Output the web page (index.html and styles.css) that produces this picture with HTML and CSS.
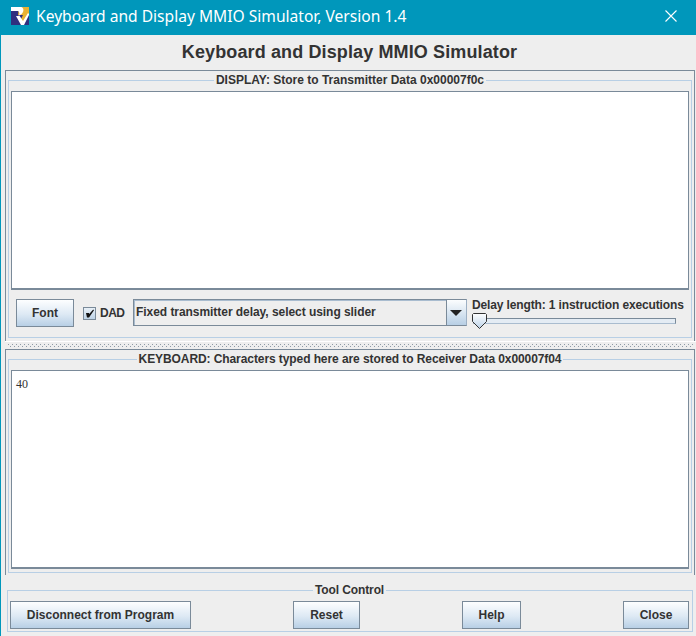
FILE: index.html
```html
<!DOCTYPE html>
<html lang="en">
<head>
  <meta charset="UTF-8" />
  <title>Keyboard and Display MMIO Simulator</title>
  <link rel="stylesheet" href="styles.css">
</head>
<body>
  <header class="titlebar">
    <svg class="logo" width="18" height="18" viewBox="0 0 18 18">
      <rect width="18" height="18" fill="#2f2f7f"/>
      <path d="M8 0H18V7L13 14H9L12 8H7Z" fill="#e8b233"/>
      <path d="M0 0H9C12 0 13 2 12 5C11 7 10 8 8 8L12 14L17 6L18 7V8L13 18H10L5 9H7C8 9 9 7 8 5C8 4 7 4 6 4H0Z" fill="#fff"/>
    </svg>
    <span class="titlebar-text">Keyboard and Display MMIO Simulator, Version 1.4</span>
    <svg class="close-icon" width="12" height="12" viewBox="0 0 12 12">
      <path d="M0.5 0.5L11.5 11.5M11.5 0.5L0.5 11.5" stroke="#fff" stroke-width="1.1" fill="none"/>
    </svg>
  </header>

  <h1>Keyboard and Display MMIO Simulator</h1>

  <section class="pane display-pane">
    <fieldset class="group">
      <legend>DISPLAY: Store to Transmitter Data 0x00007f0c</legend>
      <div class="text-area display-area"></div>
      <div class="controls">
        <button class="btn font-btn">Font</button>
        <label class="dad">
          <span class="checkbox">
            <svg width="11" height="11" viewBox="0 0 11 11">
              <path d="M2 5H5L5.2 6L9.2 1.5L10 2.3L5 9.5H3Z" fill="#111"/>
            </svg>
          </span>
          <span class="dad-text">DAD</span>
        </label>
        <div class="combo">
          <span class="combo-text">Fixed transmitter delay, select using slider</span>
          <span class="combo-arrow"></span>
        </div>
        <div class="delay">
          <div class="delay-label">Delay length: 1 instruction executions</div>
          <div class="slider">
            <div class="slider-track"></div>
            <svg class="slider-thumb" width="15" height="16" viewBox="0 0 15 16">
              <defs>
                <linearGradient id="thumbFill" x1="0" y1="0" x2="0" y2="1">
                  <stop offset="0" stop-color="#fff"/>
                  <stop offset="1" stop-color="#bcd2e8"/>
                </linearGradient>
              </defs>
              <path d="M1.5 .5H13.5L14.5 1.5V8.5L7.5 15.5L.5 8.5V1.5Z" fill="url(#thumbFill)" stroke="#333"/>
            </svg>
          </div>
        </div>
      </div>
    </fieldset>
  </section>

  <div class="splitter"><div class="grip"></div></div>

  <section class="pane keyboard-pane">
    <fieldset class="group">
      <legend class="keyboard-legend">KEYBOARD: Characters typed here are stored to Receiver Data 0x00007f04</legend>
      <div class="text-area keyboard-area">40</div>
    </fieldset>
  </section>

  <fieldset class="group tool-control">
    <legend class="tool-legend">Tool Control</legend>
    <div class="tool-buttons">
      <button class="btn disconnect">Disconnect from Program</button>
      <button class="btn reset">Reset</button>
      <button class="btn help">Help</button>
      <button class="btn close">Close</button>
    </div>
  </fieldset>
</body>
</html>
```

FILE: styles.css
```css
:root {
  --teal: #0097bb;
  --panel: #eeeeee;
  --line: #7a8a99;
  --group-line: #b8cfe5;
  --text: #333333;
}

* {
  box-sizing: border-box;
}

body {
  margin: 0;
  width: 696px;
  height: 636px;
  overflow: hidden;
  background: var(--panel);
  border-left: 1px solid var(--teal);
  color: var(--text);
  font-family: "Liberation Sans", Arial, sans-serif;
  font-size: 12px;
  font-weight: bold;
}

.titlebar {
  display: flex;
  align-items: center;
  height: 35px;
  margin-left: -1px;
  padding: 0 19px 0 11px;
  background: var(--teal);
  color: #fff;
}

.logo {
  margin-top: -3px;
}

.titlebar-text {
  margin: -3px 0 0 7px;
  font-family: "Noto Sans", sans-serif;
  font-size: 15.6px;
  font-weight: normal;
}

.close-icon {
  margin-left: auto;
  margin-top: -3px;
}

h1 {
  height: 35px;
  margin: 0;
  padding-left: 2px;
  font-size: 18px;
  letter-spacing: 0.12px;
  line-height: 34px;
  text-align: center;
}

.pane {
  margin: 0 1px 0 4px;
  padding: 2px 2px 3px;
  border-top: 1px solid var(--line);
  border-left: 1px solid var(--line);
  border-right: 1px solid var(--line);
}

.keyboard-pane {
  padding-bottom: 2px;
}

.group {
  min-width: 0;
  margin: 0;
  padding: 4px 2px 0;
  border: 1px solid var(--group-line);
}

.keyboard-pane .group {
  padding-bottom: 3px;
}

legend {
  margin: 0 auto;
  padding: 0 2px;
  font-size: 12px;
  line-height: 14px;
}

.keyboard-legend {
  letter-spacing: -0.085px;
}

.tool-legend {
  letter-spacing: -0.1px;
}

.text-area {
  background: #fff;
  border: 1px solid var(--line);
  border-bottom-width: 2px;
}

.display-area {
  height: 199px;
}

.keyboard-area {
  height: 199px;
  padding: 6px 4px;
  font-family: "Liberation Serif", serif;
  font-size: 12px;
  font-weight: normal;
}

.controls {
  display: flex;
  align-items: flex-start;
  height: 47px;
  padding: 9px 0 0 5px;
}

.btn {
  height: 28px;
  padding: 0;
  background: linear-gradient(#fdfeff, #dde9f4 55%, #b8cfe5);
  border: 1px solid var(--line);
  color: var(--text);
  font-family: inherit;
  font-size: 12px;
  font-weight: bold;
}

.font-btn {
  width: 58px;
}

.dad {
  display: flex;
  align-items: center;
  gap: 4px;
  height: 28px;
  margin-left: 9px;
}

.dad-text {
  width: 24px;
  letter-spacing: -0.5px;
}

.checkbox {
  display: flex;
  align-items: center;
  justify-content: center;
  width: 13px;
  height: 13px;
  margin-top: 1px;
  background: linear-gradient(#e8f0f7, #bdd2e6);
  border: 1px solid var(--line);
}

.combo {
  display: flex;
  width: 334px;
  height: 27px;
  margin-left: 9px;
  border: 1px solid var(--line);
  border-right-color: #9db0c4;
  box-shadow: inset 1px 1px 0 #a9bccf;
}

.combo-text {
  flex: 1;
  padding: 5px 0 0 2px;
  border-right: 1px solid var(--line);
  letter-spacing: -0.05px;
}

.combo-arrow {
  position: relative;
  width: 19px;
  background: linear-gradient(#fbfdfe, #b8cfe5);
}

.combo-arrow::after {
  content: "";
  position: absolute;
  left: 3px;
  top: 10px;
  border-left: 6px solid transparent;
  border-right: 6px solid transparent;
  border-top: 6px solid #222;
}

.delay {
  margin: -1px 0 0 5px;
  white-space: nowrap;
}

.delay-label {
  letter-spacing: -0.13px;
  line-height: 14px;
}

.slider {
  position: relative;
  height: 18px;
  margin-top: 1px;
}

.slider-track {
  position: absolute;
  left: 1px;
  top: 5px;
  width: 203px;
  height: 6px;
  background: #e4ecf4;
  border: 1px solid var(--line);
  border-bottom-color: #a9bccf;
}

.slider-thumb {
  position: absolute;
  left: 0;
  top: 0;
}

.splitter {
  height: 8px;
  margin-left: 4px;
  padding: 2px 3px 0 3px;
  border-top: 1px solid #fff;
}

.grip {
  height: 4px;
  background:
    conic-gradient(from 270deg at 1px 1px, #8f9ba6 25%, transparent 0) 0 0 / 4px 4px,
    conic-gradient(from 270deg at 1px 1px, #8f9ba6 25%, transparent 0) 2px 2px / 4px 4px;
}

.tool-control {
  margin: 8px 3px 0 6px;
  padding: 4px 3px 2px 2px;
}

.tool-buttons {
  display: flex;
  justify-content: space-between;
}

.disconnect {
  width: 181px;
}

.reset {
  width: 67px;
}

.help {
  width: 59px;
}

.close {
  width: 66px;
}
```
